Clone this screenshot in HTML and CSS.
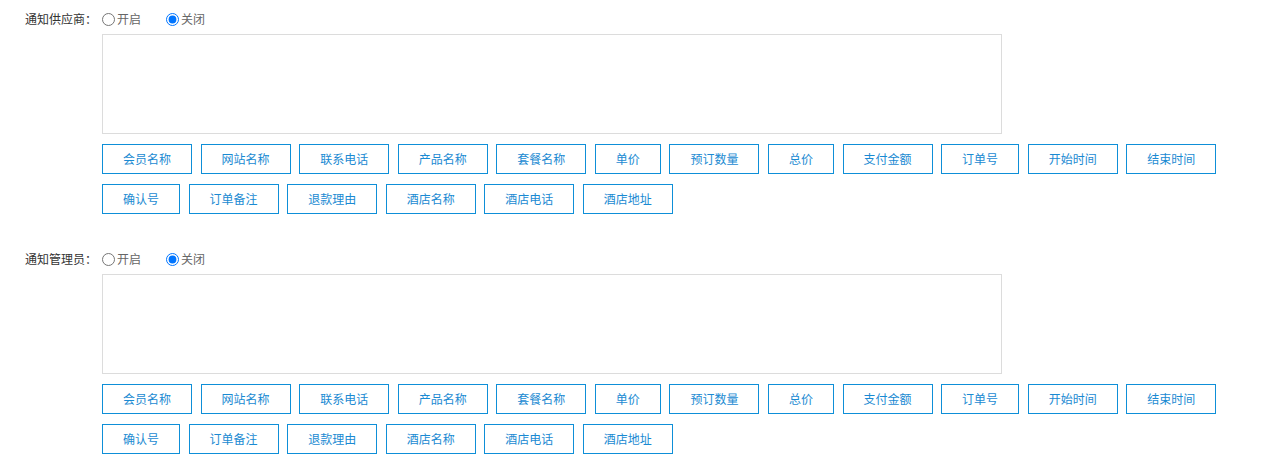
FILE: index.html
```html
<!DOCTYPE html>
<html lang="zh-CN">
<head>
<meta charset="utf-8">
<link rel="stylesheet" href="styles.css">
</head>
<body>
<div class="page">
  <div class="section">
    <div class="row">
      <span class="label">通知供应商：</span>
      <label class="opt"><input type="radio" name="s1">开启</label>
      <label class="opt"><input type="radio" name="s1" checked>关闭</label>
    </div>
    <div class="body">
      <textarea class="box"></textarea>
      <div class="tags">
        <button class="tag">会员名称</button>
        <button class="tag">网站名称</button>
        <button class="tag">联系电话</button>
        <button class="tag">产品名称</button>
        <button class="tag">套餐名称</button>
        <button class="tag">单价</button>
        <button class="tag">预订数量</button>
        <button class="tag">总价</button>
        <button class="tag">支付金额</button>
        <button class="tag">订单号</button>
        <button class="tag">开始时间</button>
        <button class="tag">结束时间</button>
        <button class="tag">确认号</button>
        <button class="tag">订单备注</button>
        <button class="tag">退款理由</button>
        <button class="tag">酒店名称</button>
        <button class="tag">酒店电话</button>
        <button class="tag">酒店地址</button>
      </div>
    </div>
  </div>
  <div class="section">
    <div class="row">
      <span class="label">通知管理员：</span>
      <label class="opt"><input type="radio" name="s2">开启</label>
      <label class="opt"><input type="radio" name="s2" checked>关闭</label>
    </div>
    <div class="body">
      <textarea class="box"></textarea>
      <div class="tags">
        <button class="tag">会员名称</button>
        <button class="tag">网站名称</button>
        <button class="tag">联系电话</button>
        <button class="tag">产品名称</button>
        <button class="tag">套餐名称</button>
        <button class="tag">单价</button>
        <button class="tag">预订数量</button>
        <button class="tag">总价</button>
        <button class="tag">支付金额</button>
        <button class="tag">订单号</button>
        <button class="tag">开始时间</button>
        <button class="tag">结束时间</button>
        <button class="tag">确认号</button>
        <button class="tag">订单备注</button>
        <button class="tag">退款理由</button>
        <button class="tag">酒店名称</button>
        <button class="tag">酒店电话</button>
        <button class="tag">酒店地址</button>
      </div>
    </div>
  </div>
</div>
</body>
</html>
```

FILE: styles.css
```css
* { box-sizing: border-box; }
html, body { margin: 0; padding: 0; background: #fff; }
body {
  font-family: "Noto Sans CJK SC", "Noto Sans", sans-serif;
  font-size: 12px;
  color: #333;
}
.page {
  padding: 7px 0 0 25px;
  display: flex;
  flex-direction: column;
  gap: 33px;
}
.row {
  display: flex;
  align-items: center;
  height: 24px;
}
.label {
  width: 72px;
  color: #333;
  line-height: 24px;
}
.opt {
  display: flex;
  align-items: center;
  color: #666;
  margin-right: 20px;
  line-height: 24px;
}
.opt input {
  width: 13px;
  height: 13px;
  margin: 0 2px 0 5px;
}
.body {
  padding-left: 77px;
  padding-top: 3px;
  display: flex;
  flex-direction: column;
  gap: 10px;
}
.box {
  display: block;
  width: 900px;
  height: 100px;
  border: 1px solid #dcdcdc;
  resize: none;
  margin: 0;
  outline: none;
}
.tags {
  display: flex;
  flex-wrap: wrap;
  column-gap: 8.55px;
  row-gap: 10px;
  width: 1140px;
}
.tag {
  height: 30px;
  padding: 0 20px;
  border: 1px solid #0e8fd8;
  background: #fff;
  color: #1a8ad2;
  font-family: "Noto Sans CJK SC", "Noto Sans", sans-serif;
  font-size: 12px;
  line-height: 28px;
  border-radius: 0;
  cursor: pointer;
}
```
